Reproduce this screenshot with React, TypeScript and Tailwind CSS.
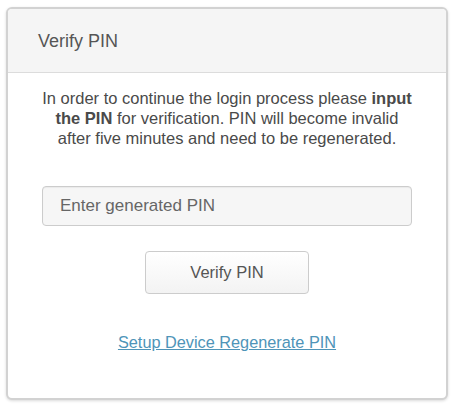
export default function App() {
  return (
    <div className="min-h-screen bg-white pt-[7px] pl-[6px] font-['Liberation_Sans',Arial,sans-serif]">
      <div className="w-[442px] h-[393px] rounded-md border-2 border-[#d2d2d2] bg-white shadow-[0_1px_3px_rgba(0,0,0,0.15)] overflow-hidden flex flex-col">
        {/* Header */}
        <div className="h-[64px] bg-[#f5f5f5] border-b border-[#dcdcdc] flex items-center pl-[30px]">
          <h3 className="text-[18px] text-[#555] pt-[1px]">Verify PIN</h3>
        </div>

        {/* Body */}
        <div className="flex flex-col items-center pt-[15px]">
          <p className="text-[16.5px] leading-5 text-[#4a4a4a] text-center w-[390px]">
            In order to continue the login process please <b>input</b>
            <br />
            <b>the PIN</b> for verification. PIN will become invalid
            <br />
            after five minutes and need to be regenerated.
          </p>

          <input
            type="text"
            placeholder="Enter generated PIN"
            className="mt-[38px] w-[370px] h-[40px] rounded border border-[#ccc] bg-[#f6f6f6] pl-[17px] text-[17px] text-[#555] placeholder:text-[#666] outline-none shadow-[inset_0_1px_1px_rgba(0,0,0,0.05)]"
          />

          <button className="mt-[25px] w-[164px] h-[43px] rounded border border-[#ccc] bg-gradient-to-b from-white to-[#f3f3f3] text-[16.5px] text-[#555]">
            Verify PIN
          </button>

          <a href="#" className="mt-[36px] text-[16.3px] text-[#4e94b8] underline">
            Setup Device Regenerate PIN
          </a>
        </div>
      </div>
    </div>
  );
}
